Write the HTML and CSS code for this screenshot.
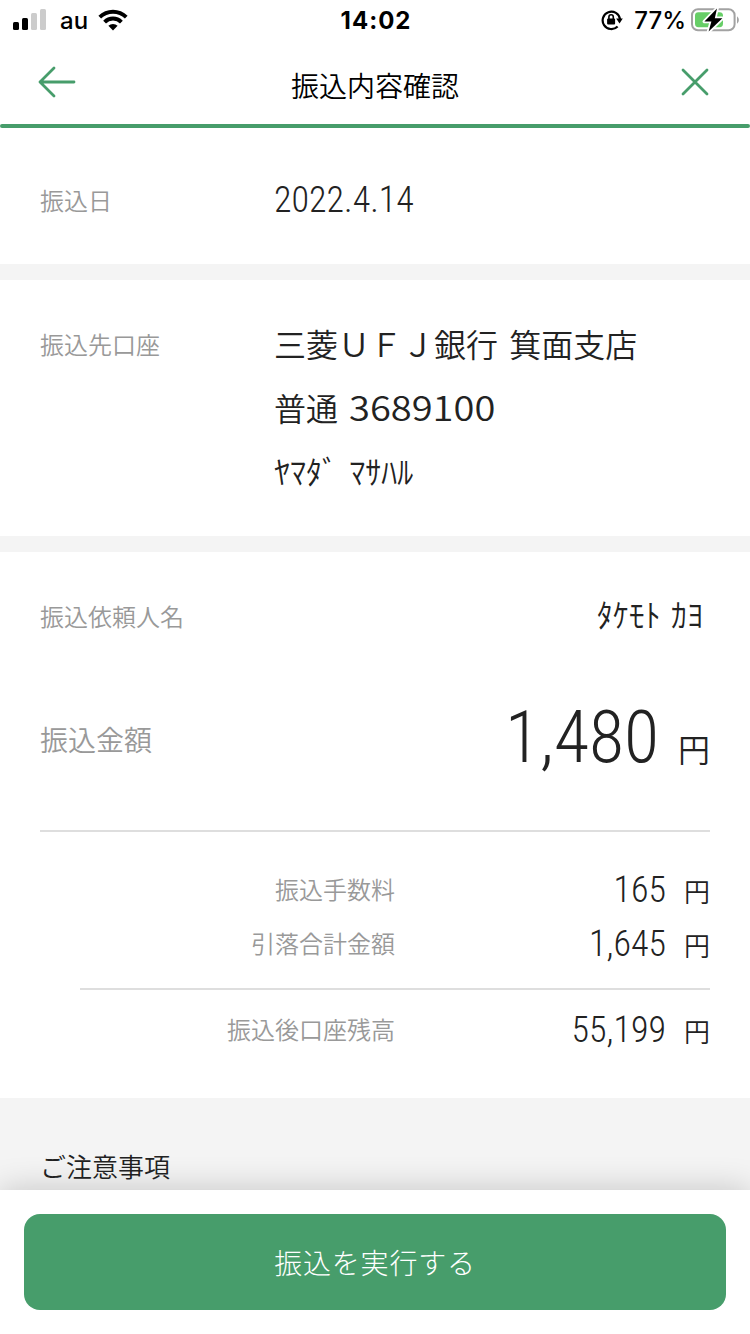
FILE: index.html
```html
<!DOCTYPE html>
<html lang="ja">
<head>
<meta charset="utf-8">
<title>振込内容確認</title>
<link rel="stylesheet" href="styles.css">
</head>
<body>
<div class="screen">
  <div class="status">
    <div class="status-left">
      <svg class="signal" width="34" height="22" viewBox="0 0 34 22"><rect x="0" y="13" width="6" height="8" rx="1.5"/><rect x="9" y="9" width="6" height="12" rx="1.5"/><rect class="off" x="18" y="4" width="6" height="17" rx="1.5"/><rect class="off" x="27" y="0" width="6" height="21" rx="1.5"/></svg>
      <span class="carrier">au</span>
      <svg class="wifi" width="30" height="22" viewBox="0 0 30 22"><path d="M0.4 6.8a20.6 20.6 0 0 1 29.2 0l-2.7 2.8a16.8 16.8 0 0 0-23.8 0z"/><path d="M5.2 11.7a13.8 13.8 0 0 1 19.6 0l-2.8 2.8a9.9 9.9 0 0 0-14 0z"/><path d="M10.4 16.8a6.5 6.5 0 0 1 9.2 0l-4.6 4.7z"/></svg>
    </div>
    <div class="clock">14:02</div>
    <div class="status-right">
      <svg class="lock" width="22" height="22" viewBox="0 0 22 22"><path class="ring" d="M16.6 17.4A8.7 8.7 0 1 1 19 10.2"/><path d="M15.2 9.4h6.6l-3.3 5z"/><rect x="6.1" y="9.4" width="8" height="6.2" rx="1"/><path class="shackle" d="M7.9 10V8a2.2 2.2 0 0 1 4.4 0v2"/></svg>
      <span class="percent">77%</span>
      <svg class="battery" width="48" height="26" viewBox="0 0 48 26"><rect class="case" x="1" y="2.2" width="42.6" height="21" rx="6"/><path class="cap" d="M46 9.2v7.6q1.9-1.4 1.9-3.8t-1.9-3.8z"/><rect class="charge" x="4" y="5.2" width="28" height="15" rx="3.4"/><path class="bolt-edge" d="M26 1.4 13.4 14.4h7l-2.8 10.2L31.4 11.2h-7.6z"/><path class="bolt" d="M26 1.4 13.4 14.4h7l-2.8 10.2L31.4 11.2h-7.6z"/></svg>
    </div>
  </div>
  <header class="nav">
    <svg width="38" height="32" viewBox="0 0 38 32"><path d="M16 2 2 16l14 14M2 16h34"/></svg>
    <h1>振込内容確認</h1>
    <svg width="28" height="28" viewBox="0 0 28 28"><path d="M2 2l24 24M26 2 2 26"/></svg>
  </header>
  <section class="date">
    <div class="label">振込日</div>
    <div class="num">2022.4.14</div>
  </section>
  <section class="payee">
    <div class="label">振込先口座</div>
    <div class="account">
      <div>三菱ＵＦＪ銀行 箕面支店</div>
      <div>普通 <span class="acct-no">3689100</span></div>
      <div class="holder">ﾔﾏﾀﾞ ﾏｻﾊﾙ</div>
    </div>
  </section>
  <section class="money">
    <div class="row sender"><div class="label">振込依頼人名</div><div class="kana">ﾀｹﾓﾄ ｶﾖ</div></div>
    <div class="row total"><div class="label">振込金額</div><div class="amount"><span class="num">1,480</span><span class="yen">円</span></div></div>
    <div class="details">
      <div class="row item"><div class="label">振込手数料</div><div class="amount"><span class="num">165</span><span class="yen">円</span></div></div>
      <div class="row item"><div class="label">引落合計金額</div><div class="amount"><span class="num">1,645</span><span class="yen">円</span></div></div>
      <div class="row item balance"><div class="label">振込後口座残高</div><div class="amount"><span class="num">55,199</span><span class="yen">円</span></div></div>
    </div>
  </section>
  <section class="notice">ご注意事項</section>
  <footer class="footer"><button class="submit">振込を実行する</button></footer>
</div>
</body>
</html>
```

FILE: styles.css
```css
* { box-sizing: border-box; }
body { margin: 0; background: #fff; }
.screen {
  width: 750px; height: 1334px; overflow: hidden;
  display: flex; flex-direction: column;
  background: #f4f4f4; color: #222;
  font-family: "Noto Sans CJK JP", sans-serif; font-weight: 350;
}
.status {
  height: 40px; flex: none; padding: 0 11px 0 13px;
  display: grid; grid-template-columns: 1fr auto 1fr; align-items: center;
  background: #fff; color: #000;
  font-family: Inter, sans-serif; font-size: 24px; line-height: 38px;
}
.status-left, .status-right { display: flex; align-items: center; }
.status-right { justify-content: flex-end; }
.signal .off { fill: #ccc; }
.carrier { font-weight: 500; margin: 2px 10px 0 13px; }
.clock { font-weight: 700; letter-spacing: 1px; padding-top: 1px; }
.percent { font-weight: 500; margin: 2px 5px 0 11px; }
.lock .ring { fill: none; stroke: #000; stroke-width: 2.2; }
.lock .shackle { fill: none; stroke: #000; stroke-width: 1.6; }
.battery .case { fill: none; stroke: #a2a2a2; stroke-width: 2; }
.battery .cap { fill: #a2a2a2; }
.battery .charge { fill: #67ce67; }
.battery .bolt-edge { fill: #fff; stroke: #fff; stroke-width: 3.6; stroke-linejoin: round; }
.nav {
  height: 88px; flex: none; padding: 0 41px 4px 38px;
  display: grid; grid-template-columns: 1fr auto 1fr; align-items: center;
  position: relative; background: #fff;
}
.nav::after {
  content: ""; position: absolute; left: 0; right: 0; bottom: 0;
  height: 4px; border-radius: 2px; background: #479d6b;
}
.nav svg { fill: none; stroke: #479d6b; stroke-width: 2.8; stroke-linecap: round; stroke-linejoin: round; }
.nav svg:last-child { justify-self: end; }
.nav h1 { margin: 6px 0 0 3px; font-size: 28px; font-weight: 350; line-height: 40px; color: #000; }
section { background: #fff; padding: 0 40px; flex: none; }
.label { font-size: 24px; line-height: 38px; color: #999; }
.num { font-family: "Roboto Condensed", Roboto, sans-serif; font-weight: 350; font-stretch: 75%; font-size: 36px; line-height: 40px; }
.date, .payee { display: grid; grid-template-columns: 234px 1fr; margin-bottom: 16px; }
.date { height: 136px; padding-top: 52px; }
.date .label { padding-top: 1px; }
.payee { height: 256px; padding-top: 31px; }
.payee .label { padding-top: 14px; }
.account { font-size: 32px; line-height: 64px; white-space: nowrap; word-spacing: 4px; }
.acct-no { display: inline-block; font-size: 34px; line-height: 60px; transform: scaleX(1.12); transform-origin: left; }
.holder { margin-top: -1px; }
.row { display: flex; justify-content: space-between; }
.sender { height: 128px; padding-top: 44px; }
.sender .label { padding-top: 1px; }
.kana { font-size: 32px; line-height: 35px; padding-right: 7px; word-spacing: 3px; }
.amount { display: flex; align-items: baseline; justify-content: flex-end; }
.yen { font-size: 26px; margin-left: 18px; }
.total { height: 152px; padding-top: 16px; border-bottom: 2px solid #dedede; }
.total .label { font-size: 28px; padding-top: 24px; }
.total .num { font-size: 72px; line-height: 84px; }
.total .yen { font-size: 32px; margin-left: 19px; }
.details { height: 266px; padding: 38px 0 0 40px; }
.item { height: 54px; }
.item .label { width: 315px; text-align: right; }
.item .amount { height: 40px; }
.balance { border-top: 2px solid #dedede; margin-top: 10px; padding-top: 20px; }
.notice { background: #f4f4f4; height: 92px; padding-top: 48px; font-size: 26px; line-height: 40px; }
.footer { height: 144px; flex: none; padding: 24px; position: relative; background: #fff; box-shadow: 0 0 32px rgba(0,0,0,.2); }
.submit {
  display: block; width: 702px; height: 96px; border: 0; border-radius: 16px; padding: 0;
  background: #479d6b; color: #fff; font: 300 28px/94px "Noto Sans CJK JP", sans-serif; letter-spacing: .8px;
}
```
